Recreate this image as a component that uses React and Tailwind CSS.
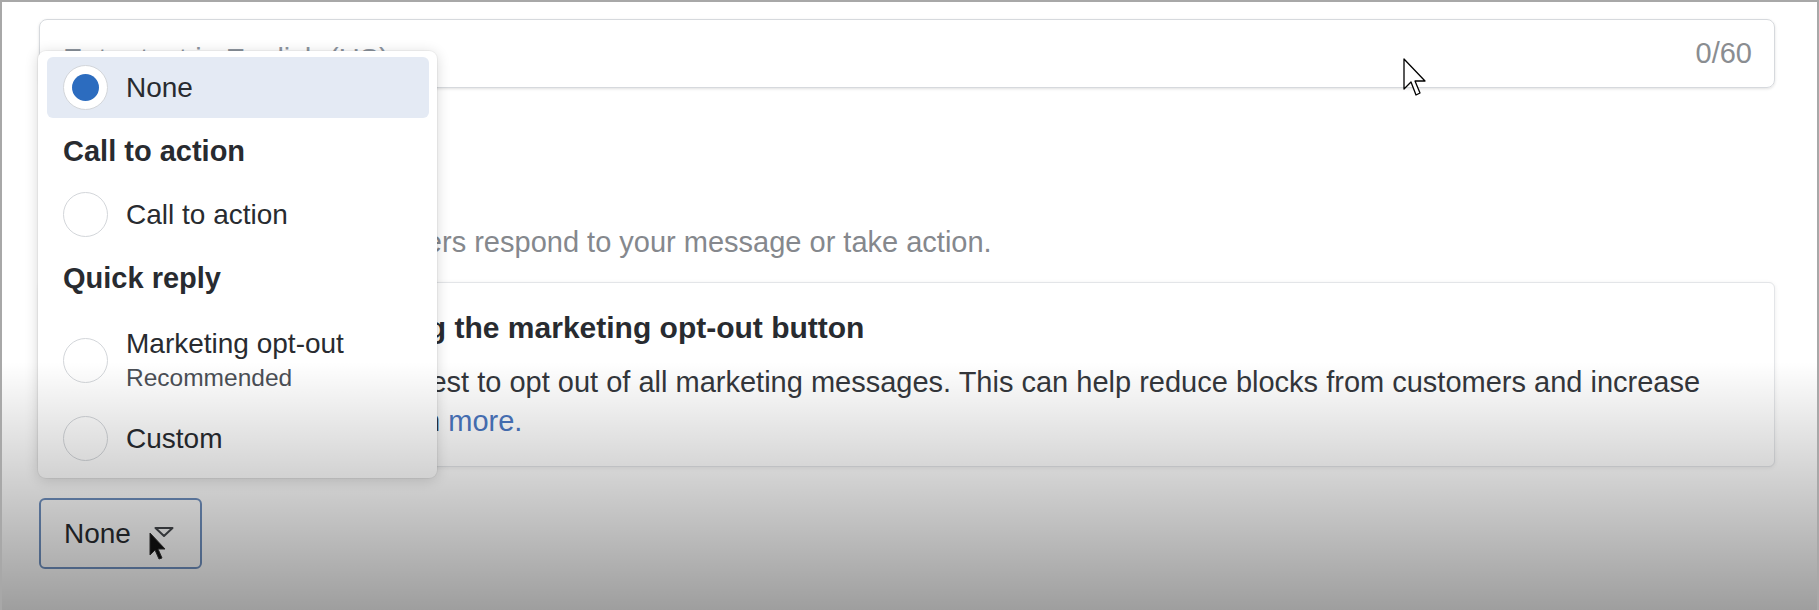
import React from 'react';

const ITEM_TEXT = 'text-[28px] leading-[34px] text-[#282b30]';

export default function App() {
  return (
    <div className="relative h-[610px] w-[1819px] overflow-hidden border-x-2 border-t-2 border-[#a8a8a8] bg-white font-['Liberation_Sans',Arial,sans-serif]">
      <div className="pl-[37px] pr-[42px] pt-[17px]">
        <div className="flex h-[69px] items-center justify-between rounded-[8px] border border-[#d6d9dd] pl-[23px] pr-[22px] text-[29px] shadow-[0_1px_3px_rgba(0,0,0,0.12)]">
          <span className="relative top-[6px] text-[#8d949e]">Enter text in English (US)</span>
          <span className="text-[#8a8d91]">0/60</span>
        </div>

        <div className="mt-[83px] text-[29px] leading-[36px] text-[#282b30]">
          <span className="font-bold">Buttons</span>
          <span className="text-[#8a8d91]"> · Optional</span>
        </div>
        <p className="mt-[18px] text-[29px] leading-[34px] text-[#85888d]">
          Create buttons that let customers respond to your message or take action.
        </p>

        <div className="mt-[23px] flex rounded-[6px] border border-[#e3e5e8] bg-white pb-[25px] pl-[23px] pt-[27px] shadow-[0_1px_4px_rgba(0,0,0,0.08)]">
          <div className="mr-[8px] flex h-[36px] w-[50px] items-center justify-center">
            <svg width="30" height="30" viewBox="0 0 24 24" fill="none" stroke="#606770" strokeWidth="2">
              <circle cx="12" cy="12" r="10" />
              <path d="M12 8v5M12 16.5v.5" />
            </svg>
          </div>
          <div>
            <h3 className="pl-[14px] text-[30px] font-bold leading-[36px] text-[#282b30]">
              We recommend using the marketing opt-out button
            </h3>
            <p className="mt-[17px] max-w-[1590px] text-[29px] leading-[39px] text-[#34373c]">
              Allow customers to request to opt out of all marketing messages. This can help reduce blocks from customers and increase your quality rating. Learn{' '}
              <a className="text-[#4a76bf]">more.</a>
            </p>
          </div>
        </div>

        <button className="mt-[31px] flex h-[71px] w-[163px] items-center rounded-[6px] border-2 border-[#7091c0] pl-[23px] text-[28px] text-[#282b30]">
          None
          <svg className="mb-[4px] ml-[23px]" width="20" height="10" viewBox="0 0 20 10" fill="none">
            <polygon points="1.5,1 18.5,1 10,9" stroke="#45484d" strokeWidth="2" strokeLinejoin="round" />
          </svg>
        </button>
      </div>

      <div className="absolute left-[36px] top-[49px] h-[427px] w-[399px] rounded-[8px] bg-white pl-[9px] pr-[8px] pt-[6px] shadow-[0_2px_14px_rgba(0,0,0,0.16),0_0_0_1px_rgba(0,0,0,0.04)]">
        <Option label="None" selected />
        <Heading>Call to action</Heading>
        <Option label="Call to action" />
        <Heading>Quick reply</Heading>
        <div className="flex items-center gap-[18px] rounded-[6px] pb-[15px] pl-[16px] pt-[16px]">
          <Radio />
          <div>
            <div className={ITEM_TEXT}>Marketing opt-out</div>
            <div className="mt-[2px] text-[24.5px] leading-[30px] text-[#4b4f56]">Recommended</div>
          </div>
        </div>
        <Option label="Custom" />
      </div>

      {/* arrow pointer, top right */}
      <svg className="absolute left-[1401px] top-[56px]" width="24" height="40" viewBox="-1 -1 24 40">
        <path d="M0 0 L0 30 L7 23 L12 36 L16 34 L11 22 L21 22 Z" fill="white" stroke="black" strokeWidth="1.3" strokeLinejoin="round" />
      </svg>

      {/* arrow pointer on the select button */}
      <svg className="absolute left-[147px] top-[530px]" width="18" height="30" viewBox="-1 -1 18 30">
        <path d="M0 0 L0 22 L5 17 L9 26 L12 25 L8 16 L15 16 Z" fill="#111" stroke="#333" strokeWidth="1" strokeLinejoin="round" />
      </svg>

      <div className="pointer-events-none absolute inset-x-0 bottom-0 top-[360px] bg-linear-to-b from-black/0 to-black/[0.38]" />
    </div>
  );
}

function Heading({ children }) {
  return (
    <div className="flex h-[66px] items-center pl-[16px] pt-[2px] text-[29px] font-bold text-[#282b30]">{children}</div>
  );
}

function Radio({ selected }) {
  return (
    <span className="flex h-[45px] w-[45px] shrink-0 items-center justify-center rounded-full border-[1.5px] border-[#d3d6da] bg-white">
      {selected && <span className="h-[27px] w-[27px] rounded-full bg-[#2c6cbf]" />}
    </span>
  );
}

function Option({ label, selected }) {
  return (
    <div className={`flex h-[61px] items-center gap-[18px] rounded-[6px] pl-[16px] ${selected ? 'bg-[#e4eaf4]' : ''}`}>
      <Radio selected={selected} />
      <span className={ITEM_TEXT}>{label}</span>
    </div>
  );
}
